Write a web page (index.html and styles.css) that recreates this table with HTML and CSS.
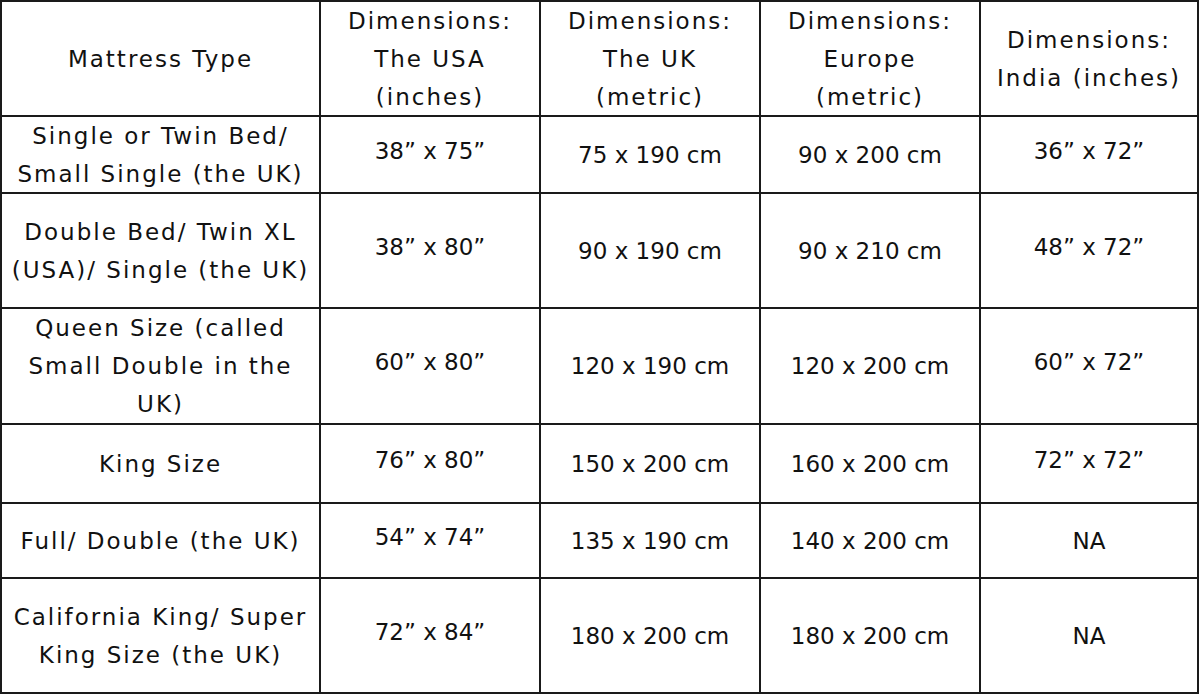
FILE: index.html
```html
<!DOCTYPE html>
<html lang="en">
<head>
<meta charset="utf-8">
<title>Mattress Sizes</title>
<link rel="stylesheet" href="styles.css">
</head>
<body>
<div class="sheet">
  <div class="cell label">Mattress Type</div>
  <div class="cell label">Dimensions:<br>The USA<br>(inches)</div>
  <div class="cell label">Dimensions:<br>The UK<br>(metric)</div>
  <div class="cell label">Dimensions:<br>Europe<br>(metric)</div>
  <div class="cell label">Dimensions:<br>India (inches)</div>

  <div class="cell label">Single or Twin Bed/<br>Small Single (the UK)</div>
  <div class="cell value up">38” x 75”</div>
  <div class="cell value">75 x 190 cm</div>
  <div class="cell value">90 x 200 cm</div>
  <div class="cell value up">36” x 72”</div>

  <div class="cell label">Double Bed/ Twin XL<br>(USA)/ Single (the UK)</div>
  <div class="cell value up">38” x 80”</div>
  <div class="cell value">90 x 190 cm</div>
  <div class="cell value">90 x 210 cm</div>
  <div class="cell value up">48” x 72”</div>

  <div class="cell label">Queen Size (called<br>Small Double in the<br>UK)</div>
  <div class="cell value up">60” x 80”</div>
  <div class="cell value">120 x 190 cm</div>
  <div class="cell value">120 x 200 cm</div>
  <div class="cell value up">60” x 72”</div>

  <div class="cell label">King Size</div>
  <div class="cell value up">76” x 80”</div>
  <div class="cell value">150 x 200 cm</div>
  <div class="cell value">160 x 200 cm</div>
  <div class="cell value up">72” x 72”</div>

  <div class="cell label">Full/ Double (the UK)</div>
  <div class="cell value up">54” x 74”</div>
  <div class="cell value">135 x 190 cm</div>
  <div class="cell value">140 x 200 cm</div>
  <div class="cell value">NA</div>

  <div class="cell label">California King/ Super<br>King Size (the UK)</div>
  <div class="cell value up">72” x 84”</div>
  <div class="cell value">180 x 200 cm</div>
  <div class="cell value">180 x 200 cm</div>
  <div class="cell value">NA</div>
</div>
</body>
</html>
```

FILE: styles.css
```css
html, body {
  margin: 0;
  padding: 0;
  background: #ffffff;
}

body {
  font-family: "DejaVu Sans", "Liberation Sans", sans-serif;
  color: #111111;
}

.sheet {
  display: grid;
  grid-template-columns: 319px 220px 220px 220px 218px;
  grid-template-rows: 115px 77px 115px 116px 79px 75px 115px;
  width: 1199px;
  box-sizing: border-box;
  border-left: 2px solid #1a1a1a;
  border-top: 2px solid #1a1a1a;
}

.cell {
  box-sizing: border-box;
  border-right: 2px solid #1a1a1a;
  border-bottom: 2px solid #1a1a1a;
  display: flex;
  align-items: center;
  justify-content: center;
  text-align: center;
  font-size: 23px;
  line-height: 38px;
}

.label {
  letter-spacing: 2px;
}

.value {
  letter-spacing: 0;
}

.value.up {
  padding-bottom: 8px;
}
```
